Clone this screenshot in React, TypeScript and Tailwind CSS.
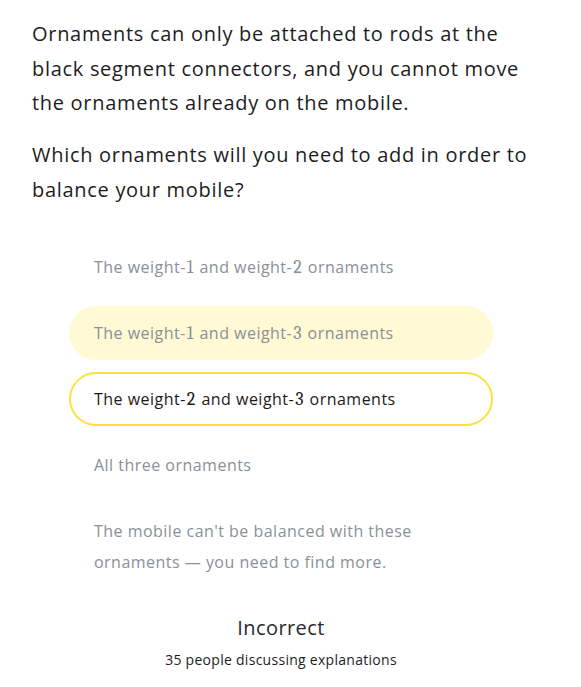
const sans = "font-['Open_Sans','Noto_Sans',sans-serif]";

function N({ children }: { children: string }) {
  return <span className="px-[1px] font-serif text-[18px] leading-none">{children}</span>;
}

const options = [
  { id: 1, state: "idle", label: <>The weight-<N>1</N> and weight-<N>2</N> ornaments</> },
  { id: 2, state: "hover", label: <>The weight-<N>1</N> and weight-<N>3</N> ornaments</> },
  { id: 3, state: "selected", label: <>The weight-<N>2</N> and weight-<N>3</N> ornaments</> },
  { id: 4, state: "idle", label: <>All three ornaments</> },
  {
    id: 5,
    state: "idle",
    label: <>The mobile can't be balanced with these ornaments — you need to find more.</>,
  },
];

export default function App() {
  return (
    <div className={`min-h-[687px] w-[581px] bg-white ${sans}`}>
      <div className="ml-8 w-[498px] pt-[17px]">
        <p className="text-[20px] leading-[34.5px] tracking-[0.035em] text-[#1d1d1f]">
          Ornaments can only be attached to rods at the black segment connectors, and you cannot move
          the ornaments already on the mobile.
        </p>
        <p className="mt-[17.5px] text-[20px] leading-[34.5px] tracking-[0.035em] text-[#1d1d1f]">
          Which ornaments will you need to add in order to balance your mobile?
        </p>

        <div className="mx-auto mt-[33px] flex w-[424px] flex-col gap-3">
          {options.map((o) => (
            <div
              key={o.id}
              className={
                o.state === "selected"
                  ? "rounded-full border-2 border-[#fbe13c] pl-[23px] pr-[70px] py-[9.5px] text-[16px] leading-[31px] tracking-[0.03em] text-[#1a1a1a]"
                  : o.state === "hover"
                  ? "rounded-full bg-[#fff9d4] pl-[25px] pr-[70px] py-[11.5px] text-[16px] leading-[31px] tracking-[0.03em] text-[#8a9099]"
                  : "rounded-full pl-[25px] pr-[70px] py-[11.5px] text-[16px] leading-[31px] tracking-[0.03em] text-[#8a9099]"
              }
            >
              {o.label}
            </div>
          ))}
        </div>

        <div className="mt-[25px] flex flex-col items-center">
          <div className="text-[20px] leading-[28px] tracking-[0.02em] text-[#2a2a2a]">Incorrect</div>
          <div className="mt-[8px] text-[14px] leading-[20px] tracking-[0.02em] text-[#1d1d1f]">
            35 people discussing explanations
          </div>
        </div>
      </div>
    </div>
  );
}
